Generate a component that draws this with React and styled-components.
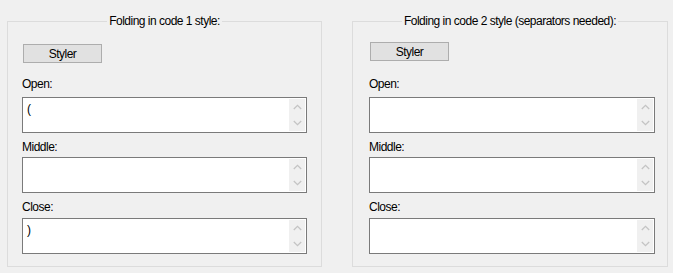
import React from 'react';
import styled, { createGlobalStyle } from 'styled-components';

const GlobalStyle = createGlobalStyle`
	html, body {
		margin: 0;
		padding: 0;
		background: #f0f0f0;
	}
	body {
		font-family: "Liberation Sans", Arial, sans-serif;
		font-size: 12px;
		letter-spacing: -0.5px;
		color: #000;
	}
`;

const Page = styled.div`
	display: flex;
	align-items: flex-start;
	gap: 30px;
	padding: 13px 0 0 7px;
	width: 673px;
	height: 273px;
	box-sizing: border-box;
`;

const GroupBox = styled.fieldset`
	margin: 0;
	width: ${p => p.width}px;
	height: 254px;
	box-sizing: border-box;
	border: 1px solid #dcdcdc;
	padding: 0;
`;

const Title = styled.legend`
	margin: 0 auto;
	padding: 0 2px;
	line-height: 16px;
	white-space: nowrap;
`;

const Body = styled.div`
	display: flex;
	flex-direction: column;
	align-items: flex-start;
	padding-left: ${p => p.padLeft}px;
`;

const Button = styled.button`
	margin: ${p => p.top}px 0 0 1px;
	width: 79px;
	height: 19px;
	padding: 0;
	background: #e1e1e1;
	border: 1px solid #adadad;
	font: inherit;
	letter-spacing: inherit;
	color: #000;
	line-height: 16px;
`;

const Label = styled.div`
	margin-top: ${p => p.top}px;
	line-height: 16px;
`;

const TextBox = styled.div`
	margin-top: ${p => p.top}px;
	width: ${p => p.width}px;
	height: 36px;
	box-sizing: border-box;
	border: 1px solid #7a7a7a;
	background: #fff;
	padding: 1px;
	display: flex;
`;

const Content = styled.div`
	flex: 1;
	padding: 2px 3px;
	line-height: 16px;
`;

const ScrollBar = styled.div`
	width: 16px;
	background: #f0f0f0;
	display: flex;
	flex-direction: column;
`;

const Arrow = styled.div`
	flex: 1;
	display: flex;
	align-items: center;
	justify-content: center;
`;

const Chevron = ({ down }) => (
	<svg width="9" height="6" viewBox="0 0 9 6">
		<path
			d={down ? 'M0.8 1 L4.5 4.7 L8.2 1' : 'M0.8 5 L4.5 1.3 L8.2 5'}
			fill="none"
			stroke="#c4c4c4"
			strokeWidth="1.3"
		/>
	</svg>
);

const Field = ({ label, value, labelTop, boxTop, width }) => (
	<>
		<Label top={labelTop}>{label}</Label>
		<TextBox top={boxTop} width={width}>
			<Content>{value}</Content>
			<ScrollBar>
				<Arrow><Chevron /></Arrow>
				<Arrow><Chevron down /></Arrow>
			</ScrollBar>
		</TextBox>
	</>
);

const groups = [
	{
		title: 'Folding in code 1 style:',
		width: 315,
		padLeft: 14,
		boxWidth: 285,
		buttonTop: 15,
		labelTop: 13,
		values: ['(', '', ')'],
	},
	{
		title: 'Folding in code 2 style (separators needed):',
		width: 316,
		padLeft: 16,
		boxWidth: 286,
		buttonTop: 13,
		labelTop: 15,
		values: ['', '', ''],
	},
];

const App = () => (
	<>
		<GlobalStyle />
		<Page>
			{groups.map(g => (
				<GroupBox key={g.title} width={g.width}>
					<Title>{g.title}</Title>
					<Body padLeft={g.padLeft}>
						<Button top={g.buttonTop}>Styler</Button>
						<Field label="Open:" value={g.values[0]} labelTop={g.labelTop} boxTop={5} width={g.boxWidth} />
						<Field label="Middle:" value={g.values[1]} labelTop={6} boxTop={2} width={g.boxWidth} />
						<Field label="Close:" value={g.values[2]} labelTop={6} boxTop={3} width={g.boxWidth} />
					</Body>
				</GroupBox>
			))}
		</Page>
	</>
);

export default App;
